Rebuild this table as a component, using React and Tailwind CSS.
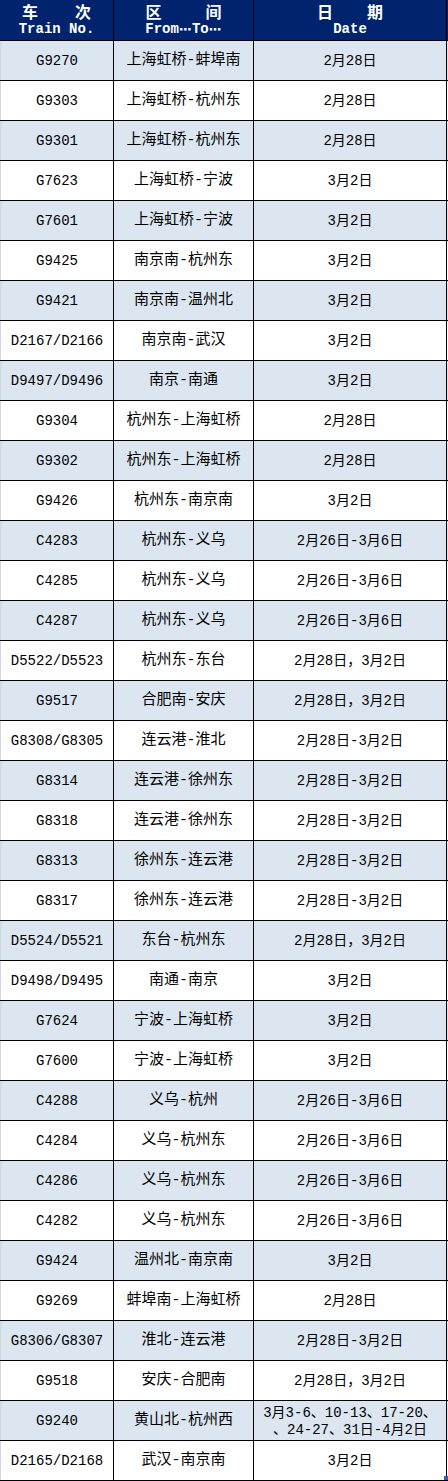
import React from "react";

const rows = [
  ["G9270", "上海虹桥-蚌埠南", "2月28日"],
  ["G9303", "上海虹桥-杭州东", "2月28日"],
  ["G9301", "上海虹桥-杭州东", "2月28日"],
  ["G7623", "上海虹桥-宁波", "3月2日"],
  ["G7601", "上海虹桥-宁波", "3月2日"],
  ["G9425", "南京南-杭州东", "3月2日"],
  ["G9421", "南京南-温州北", "3月2日"],
  ["D2167/D2166", "南京南-武汉", "3月2日"],
  ["D9497/D9496", "南京-南通", "3月2日"],
  ["G9304", "杭州东-上海虹桥", "2月28日"],
  ["G9302", "杭州东-上海虹桥", "2月28日"],
  ["G9426", "杭州东-南京南", "3月2日"],
  ["C4283", "杭州东-义乌", "2月26日-3月6日"],
  ["C4285", "杭州东-义乌", "2月26日-3月6日"],
  ["C4287", "杭州东-义乌", "2月26日-3月6日"],
  ["D5522/D5523", "杭州东-东台", "2月28日，3月2日"],
  ["G9517", "合肥南-安庆", "2月28日，3月2日"],
  ["G8308/G8305", "连云港-淮北", "2月28日-3月2日"],
  ["G8314", "连云港-徐州东", "2月28日-3月2日"],
  ["G8318", "连云港-徐州东", "2月28日-3月2日"],
  ["G8313", "徐州东-连云港", "2月28日-3月2日"],
  ["G8317", "徐州东-连云港", "2月28日-3月2日"],
  ["D5524/D5521", "东台-杭州东", "2月28日，3月2日"],
  ["D9498/D9495", "南通-南京", "3月2日"],
  ["G7624", "宁波-上海虹桥", "3月2日"],
  ["G7600", "宁波-上海虹桥", "3月2日"],
  ["C4288", "义乌-杭州", "2月26日-3月6日"],
  ["C4284", "义乌-杭州东", "2月26日-3月6日"],
  ["C4286", "义乌-杭州东", "2月26日-3月6日"],
  ["C4282", "义乌-杭州东", "2月26日-3月6日"],
  ["G9424", "温州北-南京南", "3月2日"],
  ["G9269", "蚌埠南-上海虹桥", "2月28日"],
  ["G8306/G8307", "淮北-连云港", "2月28日-3月2日"],
  ["G9518", "安庆-合肥南", "2月28日，3月2日"],
  ["G9240", "黄山北-杭州西", "MULTI"],
  ["D2165/D2168", "武汉-南京南", "3月2日"],
];

const font = {
  fontFamily: '"Liberation Mono", "Noto Sans CJK SC", monospace',
};
const cjk = { fontFamily: '"Noto Sans CJK SC", sans-serif' };
const dots = { fontFamily: '"DejaVu Sans", sans-serif' };

export default function App() {
  return (
    <div
      className="relative w-[448px] bg-white text-[14px] text-black"
      style={font}
    >
      {/* header */}
      <div className="flex h-[41px] border-b border-black bg-[#00236e] font-bold text-white">
        <div className="flex w-[114px] flex-col items-center justify-center border-r border-black pb-[1px]">
          <div className="flex h-[20px] w-[69px] items-center justify-between text-[16px] leading-[20px]" style={cjk}>
            <span>车</span>
            <span>次</span>
          </div>
          <div className="h-[17px] leading-[17px]">Train No.</div>
        </div>
        <div className="flex w-[140px] flex-col items-center justify-center border-r border-black pb-[1px]">
          <div className="flex h-[20px] w-[76px] items-center justify-between text-[16px] leading-[20px]" style={cjk}>
            <span>区</span>
            <span>间</span>
          </div>
          <div className="flex h-[17px] items-center leading-[17px]">
            <span>From</span>
            <span className="text-[13px]" style={dots}>⋯</span>
            <span>To</span>
            <span className="text-[13px]" style={dots}>⋯</span>
          </div>
        </div>
        <div className="flex w-[193px] flex-col items-center justify-center border-r border-black pb-[1px]">
          <div className="flex h-[20px] w-[66px] items-center justify-between text-[16px] leading-[20px]" style={cjk}>
            <span>日</span>
            <span>期</span>
          </div>
          <div className="h-[17px] leading-[17px]">Date</div>
        </div>
      </div>

      {rows.map((r, i) => (
        <div
          key={i}
          className={
            "flex h-[40px] border-b border-black " +
            (i % 2 === 0 ? "bg-[#dce6f1]" : "bg-white")
          }
        >
          <div className="flex w-[114px] items-center justify-center border-l border-r border-l-[#cfd6e0] border-r-black pt-[2px]">
            {r[0]}
          </div>
          <div className="flex w-[140px] items-center justify-center border-r border-black pt-[2px] text-[15px]">
            {r[1]}
          </div>
          <div className="flex w-[193px] items-center justify-center border-r border-black pt-[2px] text-center">
            {r[2] === "MULTI" ? (
              <div className="leading-[17px]">
                <div>3月3-6、10-13、17-20、</div>
                <div>、24-27、31日-4月2日</div>
              </div>
            ) : (
              r[2]
            )}
          </div>
        </div>
      ))}
      <div className="absolute bottom-[1px] right-0 h-[4px] w-[4px] bg-[#3b5bb0]" />
    </div>
  );
}
